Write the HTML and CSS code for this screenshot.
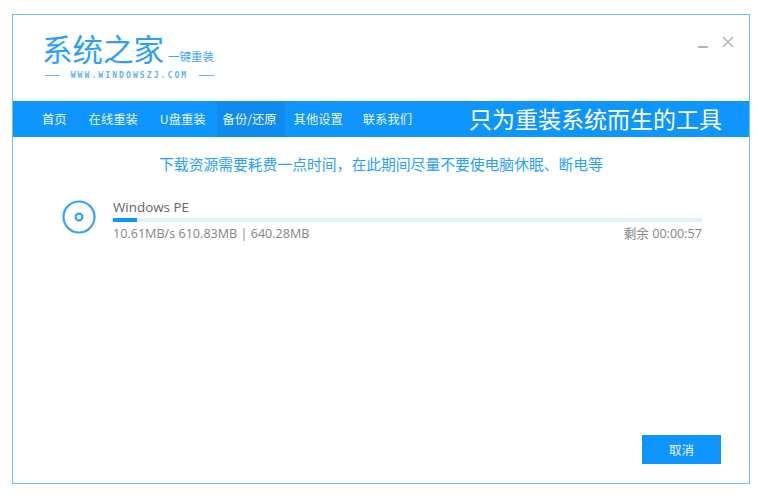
FILE: index.html
```html
<!DOCTYPE html>
<html lang="zh-CN">
<head>
<meta charset="utf-8">
<title>系统之家一键重装</title>
<link rel="stylesheet" href="styles.css">
</head>
<body>
<div class="window">
  <header class="head">
    <div class="logo">
      <div class="logo-top">
        <span class="logo-name">系统之家</span>
        <span class="logo-sub">一键重装</span>
      </div>
      <div class="logo-url">
        <i class="rule"></i>
        <span class="url-text">WWW.WINDOWSZJ.COM</span>
        <i class="rule"></i>
      </div>
    </div>
    <div class="win-controls">
      <i class="min"></i>
      <svg class="close" width="12" height="12" viewBox="0 0 12 12"><path d="M1 1 L11 11 M11 1 L1 11" stroke="#b4b4b4" stroke-width="1.5" fill="none"/></svg>
    </div>
  </header>
  <nav class="nav">
    <a class="nav-item">首页</a>
    <a class="nav-item">在线重装</a>
    <a class="nav-item">U盘重装</a>
    <a class="nav-item active">备份/还原</a>
    <a class="nav-item after">其他设置</a>
    <a class="nav-item after">联系我们</a>
    <span class="slogan">只为重装系统而生的工具</span>
  </nav>
  <main class="main">
    <p class="notice">下载资源需要耗费一点时间，在此期间尽量不要使电脑休眠、断电等</p>
    <div class="task">
      <svg class="disc" width="34" height="34" viewBox="0 0 34 34"><circle cx="17" cy="17" r="15.5" fill="none" stroke="#2ea4ff" stroke-width="2.2"/><circle cx="17" cy="17" r="3.4" fill="none" stroke="#2ea4ff" stroke-width="2.2"/></svg>
      <div class="task-body">
        <div class="task-name">Windows PE</div>
        <div class="track"><div class="fill" style="width:4%"></div></div>
        <div class="task-meta">
          <span>10.61MB/s 610.83MB | 640.28MB</span>
          <span>剩余 00:00:57</span>
        </div>
      </div>
    </div>
    <div class="actions"><button class="cancel">取消</button></div>
  </main>
</div>
</body>
</html>
```

FILE: styles.css
```css
* { box-sizing: border-box; }
html, body { margin: 0; height: 100%; }
body {
  background: #fff;
  padding: 14px 0 0 12px;
  font-family: "Noto Sans CJK SC", "Open Sans", sans-serif;
}
.window {
  width: 738px;
  height: 470px;
  border: 1px solid #6cbdfd;
  display: flex;
  flex-direction: column;
  background: #fff;
}
.head {
  height: 86px;
  flex: none;
  display: flex;
  justify-content: space-between;
  padding: 16px 15px 0 29px;
}
.logo { width: 174px; }
.logo-top { display: flex; align-items: flex-end; height: 34px; }
.logo-name {
  font-size: 30.5px;
  line-height: 34px;
  color: #2d9ffb;
  white-space: nowrap;
}
.logo-sub {
  font-size: 11.5px;
  line-height: 14px;
  color: #3ba6fb;
  margin: 0 0 2px 4px;
  white-space: nowrap;
}
.logo-url {
  display: flex;
  align-items: center;
  justify-content: space-between;
  margin-top: 5px;
  height: 10px;
  padding: 0 2px 0 3px;
}
.rule { width: 15px; height: 1px; background: #5fb5fb; }
.url-text {
  font-family: "DejaVu Sans Mono", monospace;
  font-weight: 700;
  font-size: 8px;
  letter-spacing: 2.1px;
  color: #5fb2f6;
  white-space: nowrap;
}
.win-controls {
  display: flex;
  align-items: flex-start;
  gap: 14px;
  padding-top: 4px;
}
.min { width: 10px; height: 2px; background: #b4b4b4; margin-top: 11px; }
.close { display: block; margin-top: 1px; }
.nav {
  height: 36px;
  flex: none;
  background: #0f96fe;
  display: flex;
  align-items: stretch;
  padding-left: 17px;
}
.nav-item {
  color: #eaf5ff;
  font-size: 12.3px;
  line-height: 36px;
  padding: 0 11px;
  white-space: nowrap;
}
.nav-item:first-child { padding-left: 12px; }
.nav-item.active { background: #0e8bec; padding: 0 8px 0 6px; }
.nav-item.after { padding: 0 11px 0 9px; }
.slogan {
  margin-left: auto;
  margin-right: 27px;
  color: #fff;
  font-size: 23px;
  line-height: 35px;
  white-space: nowrap;
}
.main { flex: 1; display: flex; flex-direction: column; padding: 0 0 19px 0; }
.notice {
  margin: 17px 0 0;
  text-align: center;
  font-size: 14.8px;
  line-height: 20px;
  color: #2ba0fb;
  white-space: nowrap;
}
.task { display: flex; margin: 25px 47px 0 49px; align-items: flex-start; }
.disc { flex: none; margin: 1px 17px 0 0; display: block; }
.task-body { flex: 1; }
.task-name {
  font-family: "Open Sans", sans-serif;
  font-size: 13.4px;
  line-height: 16px;
  color: #666;
}
.track { height: 4px; background: #e4eef9; margin-top: 3px; }
.fill { height: 4px; background: #0f96fe; }
.task-meta {
  display: flex;
  justify-content: space-between;
  font-family: "Open Sans", "Noto Sans CJK SC", sans-serif;
  font-size: 12.6px;
  line-height: 16px;
  color: #858585;
  margin-top: 4px;
}
.actions { margin-top: auto; display: flex; justify-content: flex-end; padding-right: 28px; }
.cancel {
  width: 79px;
  height: 29px;
  border: 0;
  background: #0f96fe;
  color: #eaf5ff;
  font-family: "Noto Sans CJK SC", sans-serif;
  font-size: 12.5px;
  padding: 0;
}
```
